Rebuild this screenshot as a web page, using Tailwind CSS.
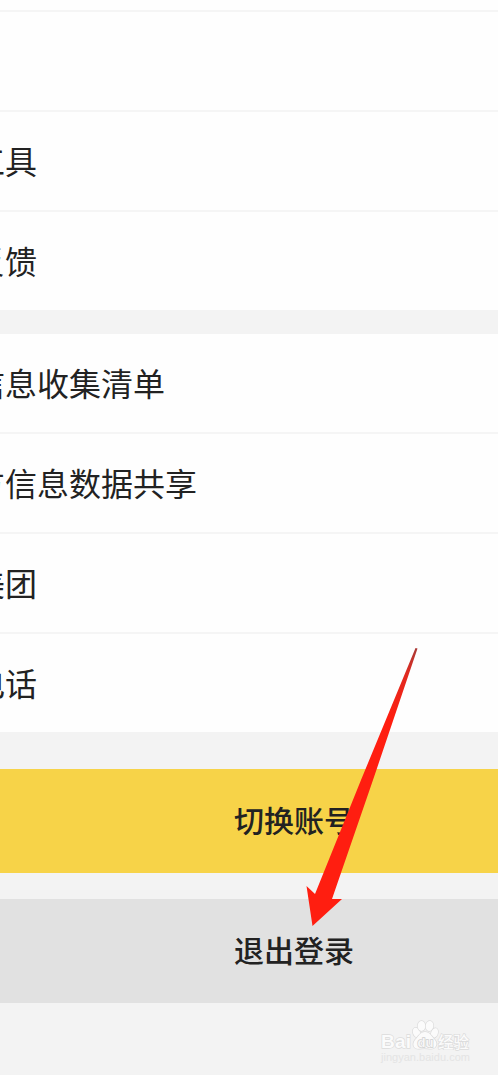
<!DOCTYPE html>
<html lang="zh-CN">
<head>
<meta charset="utf-8">
<title>设置</title>
<script src="https://cdn.jsdelivr.net/npm/@tailwindcss/browser@4"></script>
</head>
<body class="bg-[#f3f3f3] overflow-hidden">
<main class="relative w-[498px] h-[1075px] overflow-hidden bg-[#f3f3f3] text-[#222] font-['Liberation_Sans','Noto_Sans_CJK_SC',sans-serif]">
  <section class="bg-[#fefefe] text-[32px] leading-[103px] whitespace-nowrap">
    <div class="h-3 border-b-2 border-[#f5f5f5]"></div>
    <div class="h-[100px] border-b-2 border-[#f5f5f5]"></div>
    <div class="h-[100px] border-b-2 border-[#f5f5f5]"><p class="-ml-[27px]">工具</p></div>
    <div class="h-[98px]"><p class="-ml-[27px]">反馈</p></div>
  </section>
  <section class="relative mt-6 bg-[#fefefe] text-[32px] leading-[103px] whitespace-nowrap">
    <div class="h-[100px] border-b-2 border-[#f5f5f5]"><p class="-ml-[27px]">信息收集清单</p></div>
    <div class="h-[100px] border-b-2 border-[#f5f5f5]"><p class="-ml-[27px]">方信息数据共享</p></div>
    <div class="h-[100px] border-b-2 border-[#f5f5f5]"><p class="-ml-[27px]">美团</p></div>
    <div class="h-[98px]"><p class="-ml-[27px]">电话</p></div>
  </section>
  <div class="mt-[37px] h-[104px] bg-[#f7d348] pl-[234px] text-[30px] leading-[106px] font-medium whitespace-nowrap">切换账号</div>
  <div class="mt-[26px] h-[104px] bg-[#e1e1e1] pl-[234px] text-[30px] leading-[106px] font-medium whitespace-nowrap">退出登录</div>

  <svg class="absolute inset-0" width="498" height="1075" viewBox="0 0 498 1075">
    <defs>
      <linearGradient id="shaft" x1="0" y1="648" x2="0" y2="720" gradientUnits="userSpaceOnUse">
        <stop offset="0" stop-color="#a83a36"/><stop offset=".35" stop-color="#e02a20"/><stop offset="1" stop-color="#ff1e10"/>
      </linearGradient>
    </defs>
    <path d="M415.500 648L417.500 648.500L373 780L332 899L342 899L312.500 926L306.500 886L315 894L361 780Z" fill="url(#shaft)"/>
    <g fill="#fbfbfb" stroke="#dcdcdc" stroke-width="1.4" paint-order="stroke">
      <text x="381" y="1048" font-family="Liberation Sans" font-weight="700" font-size="19" textLength="30">Bai</text>
      <ellipse cx="416.500" cy="1032.500" rx="3.500" ry="5" transform="rotate(-20 416.500 1032.500)"/>
      <ellipse cx="421.500" cy="1026" rx="3.800" ry="5"/>
      <ellipse cx="429.500" cy="1026" rx="3.800" ry="5" transform="rotate(8 429.500 1026)"/>
      <ellipse cx="434.500" cy="1033" rx="3.300" ry="5" transform="rotate(20 434.500 1033)"/>
      <path d="M425 1032C430 1032 431 1036 435 1040C439 1046 434 1050 428 1048.500Q425 1048 421 1048.500C415 1050 411 1046 415 1040C419 1036 420 1032 425 1032Z"/>
      <text x="417.500" y="1047" font-family="Liberation Sans" font-weight="700" font-size="13" fill="#f6f6f6" stroke="#d0d0d0">du</text>
      <text x="438" y="1048" font-family="Noto Sans CJK SC" font-weight="500" font-size="16" textLength="31" lengthAdjust="spacingAndGlyphs">经验</text>
    </g>
    <text x="381" y="1061" font-family="Liberation Sans" font-size="11" fill="#e4e4e4" textLength="89">jingyan.baidu.com</text>
  </svg>
</main>
</body>
</html>
